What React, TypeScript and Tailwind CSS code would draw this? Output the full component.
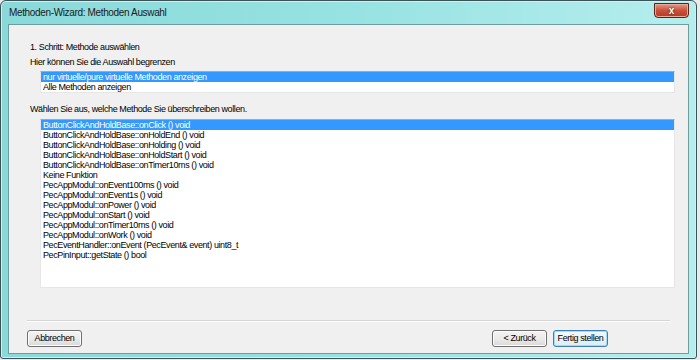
const optionen = [
  'nur virtuelle/pure virtuelle Methoden anzeigen',
  'Alle Methoden anzeigen',
]

const methoden = [
  'ButtonClickAndHoldBase::onClick () void',
  'ButtonClickAndHoldBase::onHoldEnd () void',
  'ButtonClickAndHoldBase::onHolding () void',
  'ButtonClickAndHoldBase::onHoldStart () void',
  'ButtonClickAndHoldBase::onTimer10ms () void',
  'Keine Funktion',
  'PecAppModul::onEvent100ms () void',
  'PecAppModul::onEvent1s () void',
  'PecAppModul::onPower () void',
  'PecAppModul::onStart () void',
  'PecAppModul::onTimer10ms () void',
  'PecAppModul::onWork () void',
  'PecEventHandler::onEvent (PecEvent& event) uint8_t',
  'PecPinInput::getState () bool',
]

function ListBox({ items, selected, className }: { items: string[]; selected: number; className: string }) {
  return (
    <div className={`bg-white border border-[#e6e6e6] border-t-[#a8a8a8] ${className}`}>
      {items.map((item, i) => (
        <div
          key={item}
          className={`h-[10px] leading-[10px] pl-[2px] whitespace-nowrap ${
            i === selected ? 'bg-[#3399ff] text-white' : 'text-black'
          }`}
        >
          {item}
        </div>
      ))}
    </div>
  )
}

function WinButton({ label, primary }: { label: string; primary?: boolean }) {
  return (
    <button
      className={`w-[55px] h-[17px] rounded-[3px] border text-[9px] leading-none text-black tracking-[-0.4px] ${
        primary
          ? 'border-[#3c7fb1] bg-gradient-to-b from-[#f4fafd] to-[#dcecf6] shadow-[inset_0_0_0_1px_#9fdcf6]'
          : 'border-[#707070] bg-gradient-to-b from-[#f3f3f3] via-[#ebebeb] to-[#d9d9d9] shadow-[inset_0_0_0_1px_#fcfcfc]'
      }`}
    >
      {label}
    </button>
  )
}

export default function App() {
  return (
    <div
      className="w-[700px] h-[360px] bg-[#e8ecee] overflow-hidden"
      style={{ fontFamily: '"Liberation Sans", Arial, sans-serif' }}
    >
      {/* Window frame */}
      <div className="w-[697px] h-[359px] rounded-t-[6px] rounded-b-[3px] border border-[#3c5256] bg-gradient-to-r from-[#8ad9d9] via-[#97e2e2] to-[#b6eeee] flex flex-col px-[7px] pb-[4px] shadow-[inset_0_0_0_1px_#c8f4f4]">
        {/* Title bar */}
        <div className="h-[23px] flex items-start justify-between">
          <span className="pl-[1px] pt-[6px] text-[10px] leading-[12px] text-[#1a1a1a] tracking-[-0.35px]">
            Methoden-Wizard: Methoden Auswahl
          </span>
          <div className="mt-[2px] w-[35px] h-[15px] rounded-b-[4px] border border-[#5a2219] bg-gradient-to-b from-[#e49a8a] via-[#c9503b] to-[#b43a24] flex items-center justify-center shadow-[inset_0_0_0_1px_#eda897]">
            <span className="text-white text-[10px] font-bold leading-none [text-shadow:0_0_2px_#3a0a00]">x</span>
          </div>
        </div>

        {/* Client area */}
        <div className="flex-1 bg-[#f0f0f0] border border-[#6f9c9c] flex flex-col text-[9px] tracking-[-0.4px] text-black">
          <div className="pl-[21px] mt-[16px] h-[12px] leading-[12px]">1. Schritt: Methode auswählen</div>
          <div className="pl-[21px] mt-[3px] h-[12px] leading-[12px]">Hier können Sie die Auswahl begrenzen</div>

          <ListBox items={optionen} selected={0} className="ml-[31px] mr-[13px] mt-[3px] h-[22px]" />

          <div className="pl-[21px] mt-[10px] h-[12px] leading-[12px]">
            Wählen Sie aus, welche Methode Sie überschreiben wollen.
          </div>

          <ListBox items={methoden} selected={0} className="ml-[31px] mr-[13px] mt-[4px] h-[169px]" />

          <div className="mx-[18px] mt-[32px] h-[2px] border-t border-[#d5d5d5] border-b border-b-white" />

          <div className="mx-[18px] mt-[8px] flex items-center">
            <WinButton label="Abbrechen" />
            <div className="flex-1" />
            <div className="flex gap-[6px] mr-[62px]">
              <WinButton label="< Zurück" />
              <WinButton label="Fertig stellen" primary />
            </div>
          </div>
        </div>
      </div>
    </div>
  )
}
